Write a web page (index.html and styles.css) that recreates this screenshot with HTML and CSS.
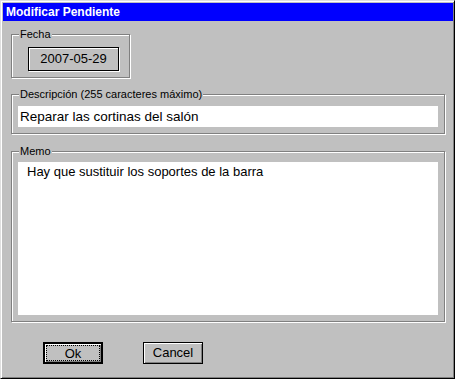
FILE: index.html
```html
<!DOCTYPE html>
<html lang="es">
<head>
  <meta charset="UTF-8" />
  <title>Modificar Pendiente</title>
  <link rel="stylesheet" href="styles.css">
</head>
<body>

  <div class="window">
    <div class="title-bar">Modificar Pendiente</div>

    <div class="group group-fecha">
      <span class="group-label">Fecha</span>
      <div class="date-box">2007-05-29</div>
    </div>

    <div class="group group-desc">
      <span class="group-label">Descripción (255 caracteres máximo)</span>
      <div class="field">Reparar las cortinas del salón</div>
    </div>

    <div class="group group-memo">
      <span class="group-label">Memo</span>
      <div class="memo">Hay que sustituir los soportes de la barra</div>
    </div>

    <div class="buttons">
      <button class="btn btn-default"><span class="focus">Ok</span></button>
      <button class="btn"><span class="focus-none">Cancel</span></button>
    </div>
  </div>

</body>
</html>
```

FILE: styles.css
```css
:root {
  --face: #c0c0c0;
  --shadow: #808080;
  --title: #0000ff;
}
* {
  margin: 0;
  padding: 0;
  box-sizing: border-box;
}
html, body {
  background: var(--face);
  font-family: "Liberation Sans", Arial, sans-serif;
  color: #000;
}
.window {
  width: 455px;
  height: 379px;
  background: var(--face);
  border: 1px solid;
  border-color: #dfdfdf #000 #000 #dfdfdf;
  box-shadow: inset 1px 1px #fff, inset -1px -1px var(--shadow);
  padding: 2px 1px 1px 2px;
}
.title-bar {
  height: 18px;
  background: var(--title);
  color: #fff;
  font-weight: bold;
  font-size: 12px;
  line-height: 18px;
  padding-left: 3px;
}
.group {
  position: relative;
  border: 1px solid var(--shadow);
  box-shadow: inset 1px 1px #fff, 1px 1px #fff;
}
.group-label {
  position: absolute;
  top: -8px;
  left: 7px;
  padding: 0 1px;
  background: var(--face);
  font-size: 11px;
  line-height: 14px;
}
.group-fecha {
  width: 119px;
  height: 44px;
  margin: 13px 0 0 8px;
}
.date-box {
  width: 91px;
  height: 24px;
  margin: 12px 0 0 16px;
  border: 1px solid #000;
  box-shadow: inset 1px 1px #fff, 1px 1px #fff;
  font-size: 13px;
  line-height: 22px;
  text-align: center;
}
.group-desc {
  height: 40px;
  margin: 16px 8px 0 8px;
}
.field {
  height: 21px;
  margin: 11px 6px 0 6px;
  background: #fff;
  font-size: 13.5px;
  line-height: 21px;
  padding-left: 2px;
}
.group-memo {
  height: 171px;
  margin: 17px 8px 0 8px;
}
.memo {
  height: 153px;
  margin: 10px 6px 0 6px;
  background: #fff;
  font-size: 13px;
  line-height: 18px;
  padding: 1px 0 0 9px;
}
.buttons {
  display: flex;
  gap: 40px;
  margin-top: 20px;
  padding-left: 40px;
}
.btn {
  width: 60px;
  height: 22px;
  background: var(--face);
  border: 1px solid #000;
  box-shadow: inset 1px 1px #fff, inset -1px -1px var(--shadow);
  font-family: "Liberation Sans", Arial, sans-serif;
  font-size: 13px;
  color: #000;
  padding: 1px;
}
.btn-default {
  border-width: 2px;
  padding: 1px;
}
.btn span {
  display: block;
  height: 100%;
  line-height: 15px;
}
.btn .focus {
  border: 1px dotted #000;
}
.btn .focus-none {
  border: 1px solid transparent;
}
```
